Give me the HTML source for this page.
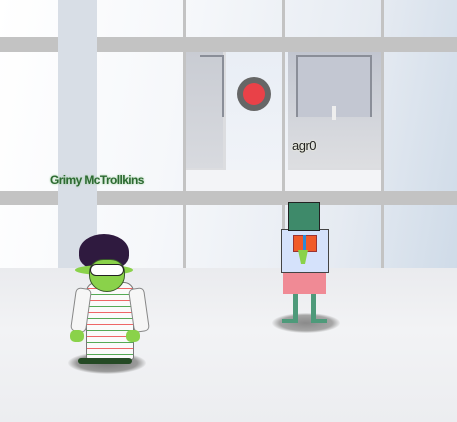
<!DOCTYPE html>
<html><head><style>
*{margin:0;padding:0}
body{width:457px;height:422px;overflow:hidden;position:relative;font-family:"Liberation Sans",sans-serif;background:#eef0f3}
.a{position:absolute}
</style></head><body>
<div class="a" style="left:0;top:0;width:457px;height:268px;background:linear-gradient(100deg,#ffffff 0%,#f5f7fa 40%,#e6ebf2 75%,#cfdbe8 100%)"></div>
<!-- inner scene -->
<div class="a" style="left:186px;top:52px;width:195px;height:139px;background:#dcdde0"></div>
<div class="a" style="left:186px;top:52px;width:37px;height:116px;background:linear-gradient(#c9ccd3,#d8dadf)"></div>
<div class="a" style="left:288px;top:52px;width:93px;height:116px;background:linear-gradient(#c2c6d0,#d6d8dd 70%,#dddee1)"></div>
<div class="a" style="left:296px;top:55px;width:72px;height:60px;border:2px solid #8a8e98;border-bottom:none;background:#c3c7d2"></div>
<div class="a" style="left:200px;top:55px;width:22px;height:60px;border:2px solid #8a8e98;border-left:none;border-bottom:none"></div>
<div class="a" style="left:226px;top:52px;width:62px;height:118px;background:linear-gradient(#e9eef5,#f0f3f8)"></div>
<div class="a" style="left:186px;top:170px;width:195px;height:21px;background:#f3f4f7"></div>
<div class="a" style="left:237px;top:77px;width:34px;height:34px;border-radius:50%;background:#666;"></div>
<div class="a" style="left:243px;top:83px;width:22px;height:22px;border-radius:50%;background:#e94148"></div>
<div class="a" style="left:332px;top:106px;width:4px;height:14px;background:#eee"></div>
<div class="a" style="left:292px;top:138px;font-size:13px;letter-spacing:-0.5px;color:#222;text-shadow:0 0 2px #ffd;">agr0</div>
<!-- bars -->
<div class="a" style="left:0;top:37px;width:457px;height:15px;background:#c3c3c3"></div>
<div class="a" style="left:0;top:191px;width:457px;height:14px;background:#c3c3c3"></div>
<div class="a" style="left:183px;top:0;width:3px;height:268px;background:#c3c3c3"></div>
<div class="a" style="left:282px;top:0;width:3px;height:268px;background:#c3c3c3"></div>
<div class="a" style="left:381px;top:0;width:3px;height:268px;background:#c3c3c3"></div>
<div class="a" style="left:58px;top:0;width:39px;height:268px;background:#d8dee6"></div>
<div class="a" style="left:50px;top:173px;font-size:12px;font-weight:bold;letter-spacing:-0.6px;color:#2d6a32;text-shadow:0 0 2px #9c9;">Grimy McTrollkins</div>
<!-- floor -->
<div class="a" style="left:0;top:268px;width:457px;height:154px;background:linear-gradient(#eaebee,#f2f3f5 40%,#ecedf0)"></div>
<!-- troll -->
<div class="a" style="left:68px;top:352px;width:78px;height:22px;border-radius:50%;background:radial-gradient(#7a7a7a,#9a9a9a 55%,rgba(200,200,200,0) 72%)"></div>
<div class="a" style="left:86px;top:282px;width:46px;height:76px;background:#fafafa;border:1px solid #777;border-radius:10px 10px 3px 3px;background-image:repeating-linear-gradient(#fafafa 0 5px,#e66 5px 6px,#fafafa 6px 11px,#5a5 11px 12px)"></div>
<div class="a" style="left:73px;top:288px;width:14px;height:42px;background:#f6f6f6;border:1px solid #888;border-radius:5px;transform:rotate(8deg)"></div>
<div class="a" style="left:131px;top:288px;width:14px;height:42px;background:#f6f6f6;border:1px solid #888;border-radius:5px;transform:rotate(-8deg)"></div>
<div class="a" style="left:70px;top:330px;width:14px;height:12px;background:#8ad24a;border-radius:5px"></div>
<div class="a" style="left:126px;top:330px;width:14px;height:12px;background:#8ad24a;border-radius:5px"></div>
<div class="a" style="left:78px;top:358px;width:54px;height:6px;background:#254a25;border-radius:4px"></div>
<div class="a" style="left:79px;top:234px;width:50px;height:36px;background:#2f1a3f;border-radius:50% 50% 40% 40%"></div>
<div class="a" style="left:75px;top:265px;width:58px;height:10px;background:#8ad24a;border-radius:50%"></div>
<div class="a" style="left:89px;top:259px;width:34px;height:31px;background:#8ad24a;border-radius:40% 40% 50% 50%;border:1px solid #3a5a2a"></div>
<div class="a" style="left:90px;top:264px;width:32px;height:10px;background:#fff;border:1px solid #222;border-radius:6px"></div>
<!-- box guy -->
<div class="a" style="left:272px;top:313px;width:68px;height:20px;border-radius:50%;background:radial-gradient(#8a8a8a,#a6a6a6 55%,rgba(200,200,200,0) 72%)"></div>
<div class="a" style="left:293px;top:294px;width:5px;height:28px;background:#4e9a7a"></div>
<div class="a" style="left:311px;top:294px;width:5px;height:28px;background:#4e9a7a"></div>
<div class="a" style="left:282px;top:319px;width:16px;height:4px;background:#4e9a7a"></div>
<div class="a" style="left:311px;top:319px;width:16px;height:4px;background:#4e9a7a"></div>
<div class="a" style="left:283px;top:271px;width:43px;height:23px;background:#f08a95"></div>
<div class="a" style="left:281px;top:229px;width:46px;height:42px;background:#d5e2fb;border:1px solid #444"></div>
<div class="a" style="left:293px;top:235px;width:22px;height:15px;background:#f05a2a;border:1px solid #933"></div>
<div class="a" style="left:303px;top:235px;width:3px;height:15px;background:#2a8ad8"></div>
<div class="a" style="left:298px;top:250px;width:10px;height:14px;background:#8ad24a;clip-path:polygon(0 0,100% 0,70% 100%,30% 100%)"></div>
<div class="a" style="left:288px;top:202px;width:30px;height:27px;background:#3e8a6a;border:1px solid #222"></div>
</body></html>
